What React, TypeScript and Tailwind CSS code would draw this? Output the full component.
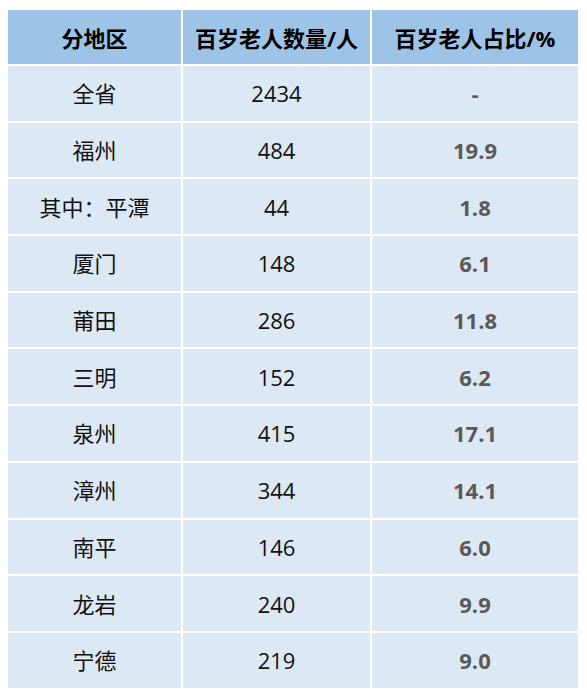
import React from "react";

const rows: [string, string, string][] = [
  ["全省", "2434", "-"],
  ["福州", "484", "19.9"],
  ["其中：平潭", "44", "1.8"],
  ["厦门", "148", "6.1"],
  ["莆田", "286", "11.8"],
  ["三明", "152", "6.2"],
  ["泉州", "415", "17.1"],
  ["漳州", "344", "14.1"],
  ["南平", "146", "6.0"],
  ["龙岩", "240", "9.9"],
  ["宁德", "219", "9.0"],
];

export default function App() {
  return (
    <div
      className="w-[587px] h-[697px] bg-white pt-[10px] pl-[8px]"
      style={{ fontFamily: '"Open Sans", "Noto Sans CJK SC", sans-serif' }}
    >
      <div className="grid w-[570px] grid-cols-[173px_187px_206px] gap-[2px]">
        <div className="h-[54px] pt-[2px] bg-[#9dc3e6] flex items-center justify-center text-[22px] font-bold text-black">分地区</div>
        <div className="h-[54px] pt-[2px] bg-[#9dc3e6] flex items-center justify-center text-[22px] font-bold text-black">百岁老人数量/人</div>
        <div className="h-[54px] pt-[2px] bg-[#9dc3e6] flex items-center justify-center text-[22px] font-bold text-black">百岁老人占比/%</div>
        {rows.map(([a, b, c]) => (
          <React.Fragment key={a}>
            <div className="h-[54.7px] pt-[1px] bg-[#dde8f5] flex items-center justify-center text-[22px] text-[#111]">{a}</div>
            <div className="h-[54.7px] pt-[1px] bg-[#dde8f5] flex items-center justify-center text-[22px] text-[#111]">{b}</div>
            <div className="h-[54.7px] pt-[1px] bg-[#dde8f5] flex items-center justify-center text-[22px] font-bold text-[#595959]">{c}</div>
          </React.Fragment>
        ))}
      </div>
    </div>
  );
}
